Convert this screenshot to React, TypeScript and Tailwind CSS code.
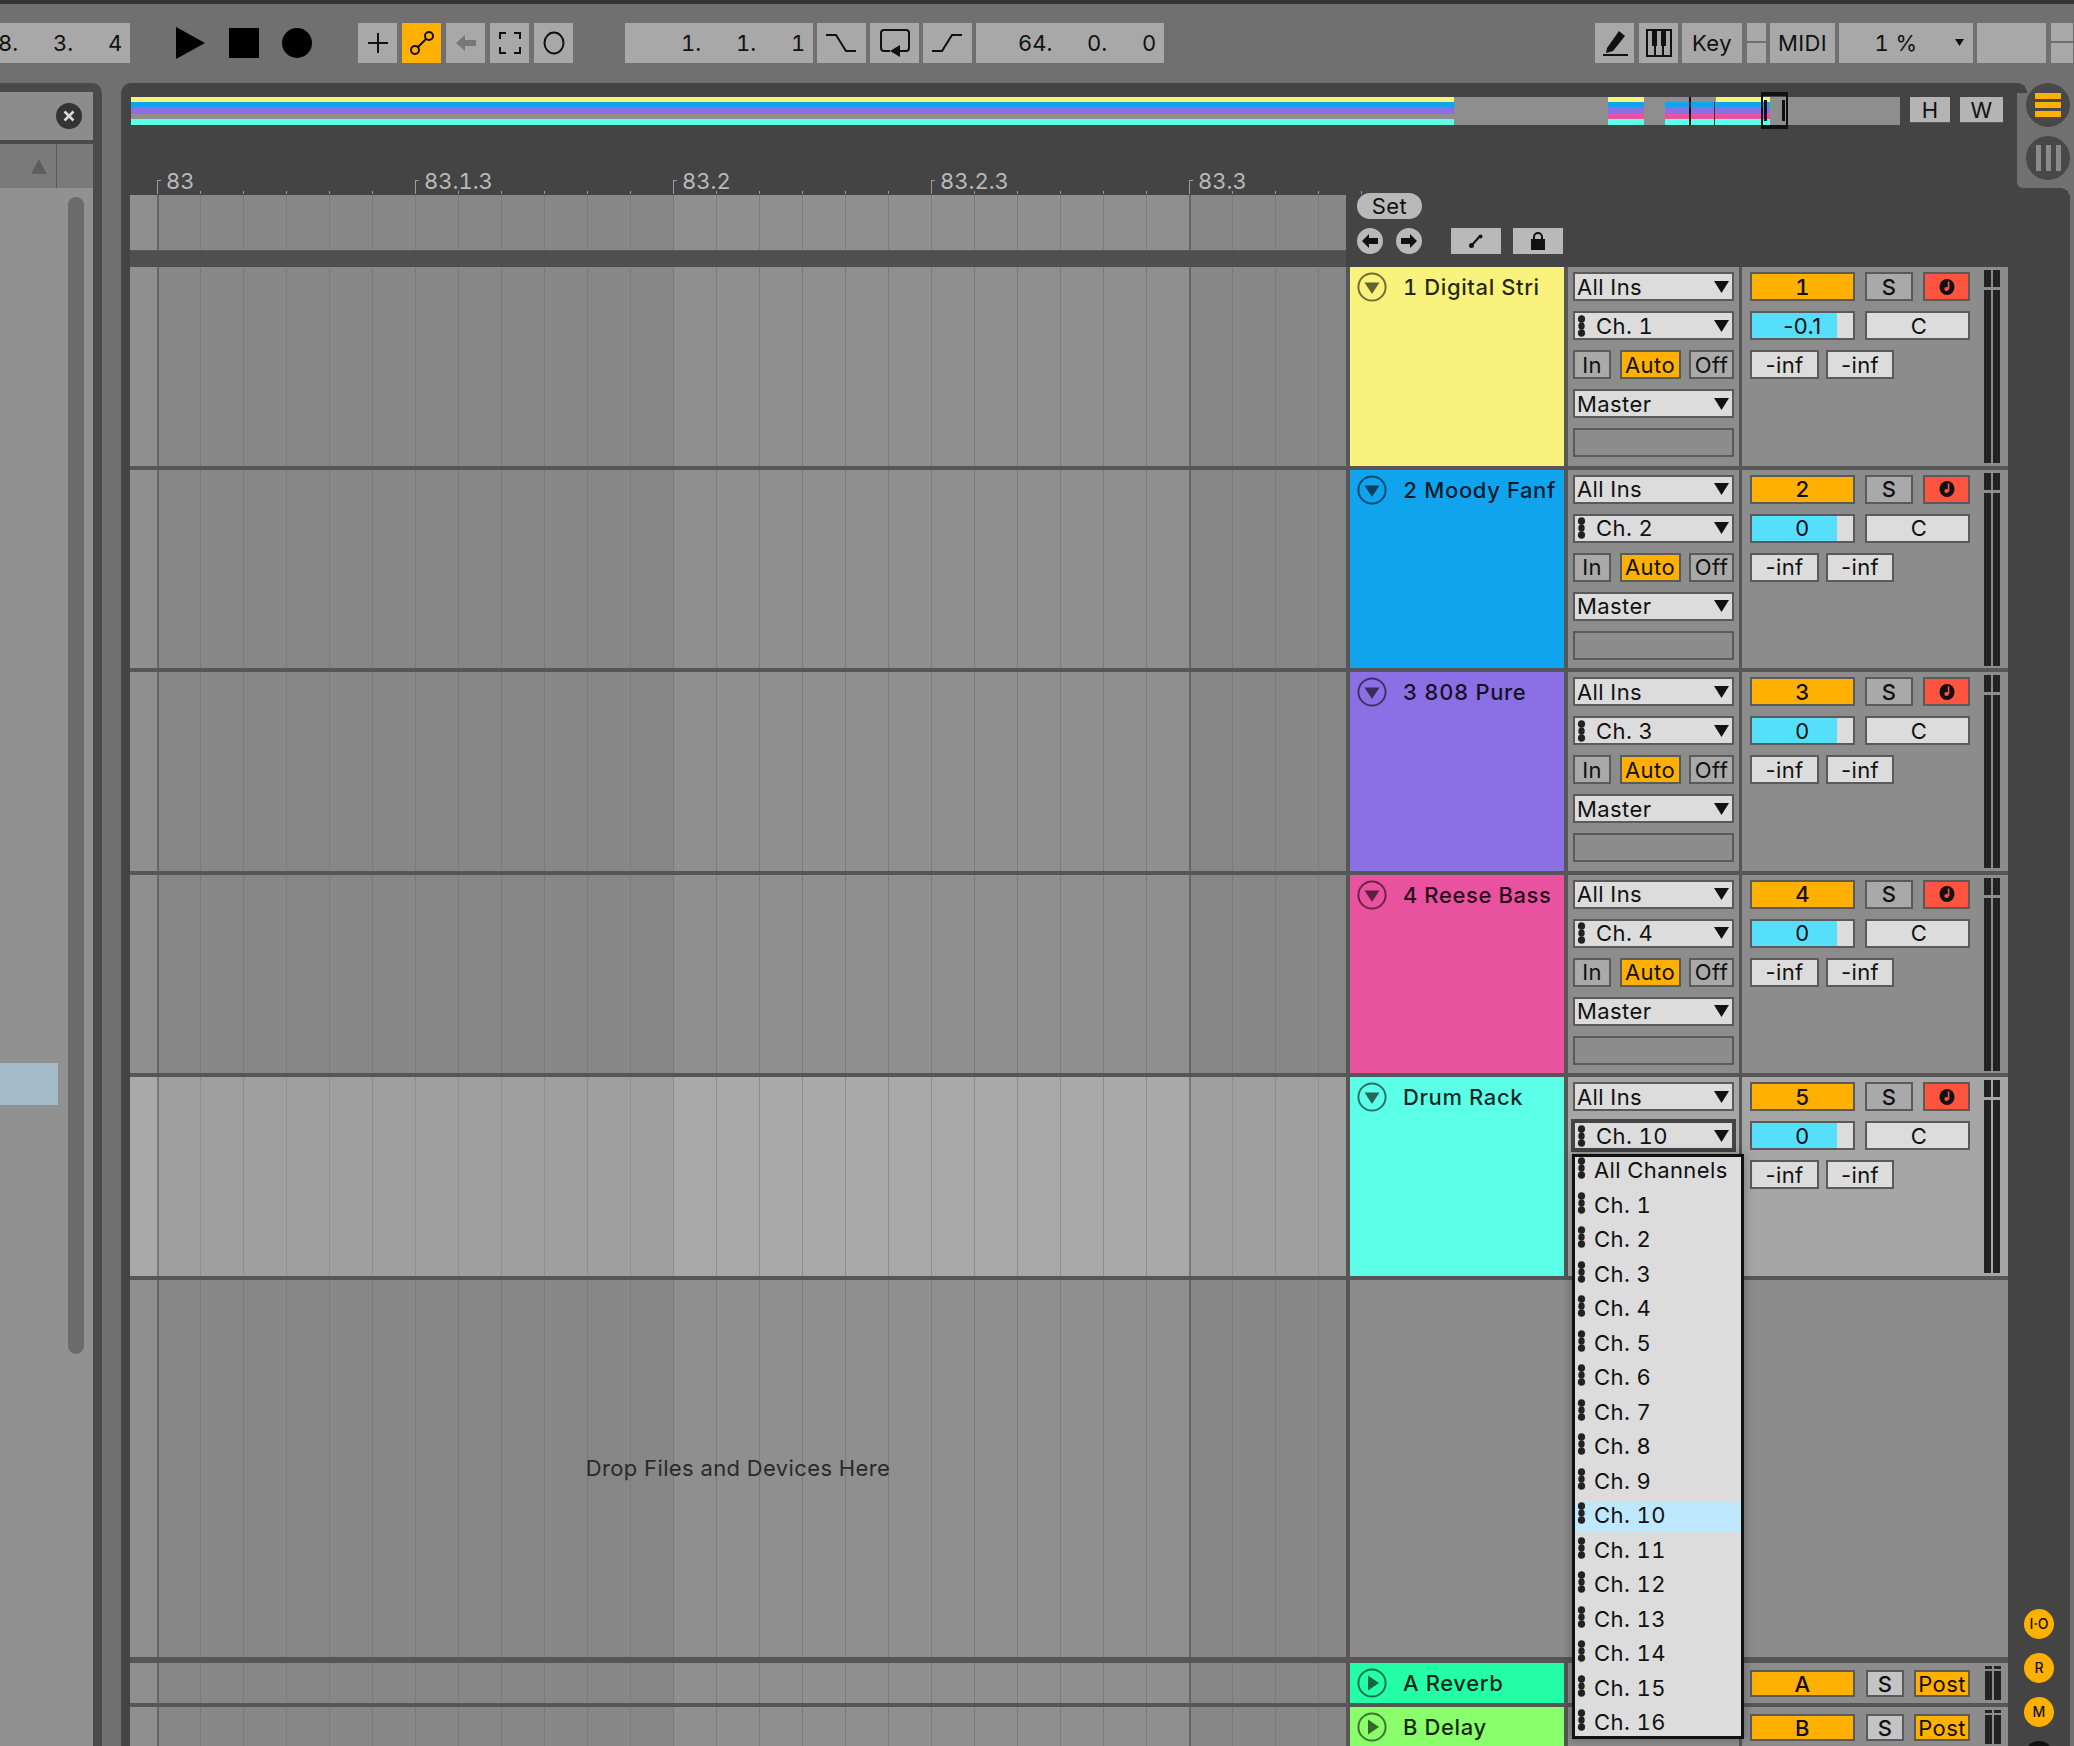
import React from "react";

const tracks = [
  { num: "1", name: "1 Digital Stri", color: "bg-[#f9f27c]", ch: "Ch. 1", pan: "-0.1" },
  { num: "2", name: "2 Moody Fanf", color: "bg-[#10a4ee]", ch: "Ch. 2", pan: "0" },
  { num: "3", name: "3 808 Pure", color: "bg-[#8b6fe4]", ch: "Ch. 3", pan: "0" },
  { num: "4", name: "4 Reese Bass", color: "bg-[#e8529f]", ch: "Ch. 4", pan: "0" },
];

const channels = [
  "All Channels", "Ch. 1", "Ch. 2", "Ch. 3", "Ch. 4", "Ch. 5", "Ch. 6", "Ch. 7", "Ch. 8",
  "Ch. 9", "Ch. 10", "Ch. 11", "Ch. 12", "Ch. 13", "Ch. 14", "Ch. 15", "Ch. 16",
];

const rulerLabels = ["83", "83.1.3", "83.2", "83.2.3", "83.3"];

function MidiDots() {
  return (
    <svg width="9" height="22" viewBox="0 0 9 22" className="flex-none">
      <ellipse cx="4.5" cy="4" rx="3.6" ry="3.8" fill="#222" />
      <ellipse cx="4.5" cy="11" rx="3.2" ry="3.8" fill="#222" />
      <ellipse cx="4.5" cy="18" rx="3.6" ry="3.8" fill="#222" />
    </svg>
  );
}

function Caret() {
  return (
    <svg width="15" height="12" viewBox="0 0 15 12" className="flex-none">
      <path d="M0 0h15L7.5 12z" fill="#111" />
    </svg>
  );
}

function Select({ label, midi, focus }: { label: string; midi?: boolean; focus?: boolean }) {
  return (
    <div className={`flex items-center justify-between h-[29px] bg-[#dcdcdc] border-2 pl-[2px] pr-[3px] ${focus ? "border-[#444] outline-2 outline-[#444]" : "border-[#5a5a5a]"}`}>
      <span className="flex items-center gap-[10px]">
        {midi && <MidiDots />}
        <span>{label}</span>
      </span>
      <Caret />
    </div>
  );
}

function Cell({ className, children }: { className: string; children?: React.ReactNode }) {
  return (
    <div className={`flex items-center justify-center h-[29px] border-2 border-[#5a5a5a] ${className}`}>
      {children}
    </div>
  );
}

function GridCells({ bright }: { bright?: boolean }) {
  const line = bright ? "border-[#8e8e8e]" : "border-[#7a7a7a]";
  const strong = bright ? "border-[#777]" : "border-[#666]";
  const light = bright ? "bg-[#a9a9a9]" : "bg-[#8f8f8f]";
  const dark = bright ? "bg-[#9f9f9f]" : "bg-[#878787]";
  const cells = Array.from({ length: 28 }, (_, i) => i);
  return (
    <div className="flex flex-none w-[1216px] h-full overflow-hidden">
      <div className={`flex-none w-[27px] ${light}`} />
      {cells.map((i) => (
        <div key={i} className={`flex-none w-[43px] ${i % 24 === 0 ? `border-l-2 ${strong}` : `border-l ${line}`} ${i % 24 < 12 ? dark : light}`} />
      ))}
    </div>
  );
}

function Meter({ tall }: { tall?: boolean }) {
  return (
    <div className={`flex gap-[2px] flex-none ${tall ? "h-[193px] -mt-[2px]" : "h-[34px]"}`}>
      <div className={`flex flex-col w-[7px] h-full ${tall ? "gap-[3px]" : "gap-[2px]"}`}>
        <div className={`bg-[#222] ${tall ? "h-[17px]" : "h-[3px]"}`} />
        <div className="bg-[#222] flex-1" />
      </div>
      <div className={`flex flex-col w-[7px] h-full ${tall ? "gap-[3px]" : "gap-[2px]"}`}>
        <div className={`bg-[#222] ${tall ? "h-[17px]" : "h-[3px]"}`} />
        <div className="bg-[#222] flex-1" />
      </div>
    </div>
  );
}

function ArmIcon() {
  return (
    <svg width="16" height="18" viewBox="0 0 16 18">
      <ellipse cx="8" cy="9" rx="7.5" ry="8" fill="#111" />
      <path d="M9.600 3.500v7.500" stroke="#ff5440" strokeWidth="1.6" />
      <ellipse cx="7.6" cy="11" rx="2.3" ry="1.9" fill="#ff5440" />
    </svg>
  );
}

function FoldIcon({ open = true }: { open?: boolean }) {
  return (
    <svg width="30" height="30" viewBox="0 0 30 30" className="flex-none">
      <circle cx="15" cy="15" r="13.6" fill="none" stroke="#000" strokeOpacity="0.55" strokeWidth="2" />
      {open ? <path d="M7.500 10.500h15L15 22z" fill="#000" fillOpacity="0.6" /> : <path d="M11 7.500v15L22 15z" fill="#000" fillOpacity="0.6" />}
    </svg>
  );
}

function TrackRow({ t, bright, menu }: { t: { num: string; name: string; color: string; ch: string; pan: string }; bright?: boolean; menu?: boolean }) {
  const panel = bright ? "bg-[#a6a6a6]" : "bg-[#8c8c8c]";
  return (
    <div className="flex flex-none h-[198.5px]">
      <GridCells bright={bright} />
      <div className={`flex-none w-[214px] ml-[4px] ${t.color} flex items-start gap-[16px] pl-[7px] pt-[5px] font-medium text-[#000]/85`}>
        <FoldIcon />
        <span className="whitespace-nowrap leading-[30px] tracking-[0.6px]">{t.name}</span>
      </div>
      <div className={`relative flex-none w-[171px] ml-[4px] ${panel} flex flex-col gap-[10px] px-[5px] pt-[5px]`}>
        <Select label="All Ins" />
        <Select label={t.ch} midi focus={menu} />
        {!menu && (
          <>
            <div className="flex justify-between">
              <Cell className="w-[38px] bg-[#a9a9a9]">In</Cell>
              <Cell className="w-[61px] bg-[#ffb000]">Auto</Cell>
              <Cell className="w-[45px] bg-[#a9a9a9]">Off</Cell>
            </div>
            <Select label="Master" />
            <div className="h-[29px] border-2 border-[#5a5a5a] bg-[#8c8c8c]" />
          </>
        )}
        {menu && <ChannelMenu />}
      </div>
      <div className={`flex-none w-[266px] ml-[3px] ${panel} flex pl-[8px] pt-[5px] pr-[8px] justify-between`}>
        <div className="flex flex-col gap-[10px] w-[220px]">
          <div className="flex">
            <Cell className="w-[105px] bg-[#ffb000] font-medium">{t.num}</Cell>
            <Cell className="w-[48px] ml-[10px] bg-[#a9a9a9] font-medium">S</Cell>
            <Cell className="w-[47px] ml-[10px] bg-[#ff5440]"><ArmIcon /></Cell>
          </div>
          <div className="flex">
            <div className="relative w-[105px] h-[29px] border-2 border-[#5a5a5a] bg-[#dcdcdc] flex">
              <div className="w-[85px] bg-[#55dffa]" />
              <span className="absolute inset-0 flex items-center justify-center normal-nums">{t.pan}</span>
            </div>
            <Cell className="w-[105px] ml-[10px] pl-[3px] bg-[#dcdcdc]">C</Cell>
          </div>
          <div className="flex gap-[7px]">
            <Cell className="w-[69px] bg-[#dcdcdc] normal-nums">-inf</Cell>
            <Cell className="w-[68px] bg-[#dcdcdc] normal-nums">-inf</Cell>
          </div>
        </div>
        <Meter tall />
      </div>
    </div>
  );
}

function ChannelMenu() {
  return (
    <div className="absolute left-[4px] top-[77px] w-[172px] h-[585px] overflow-hidden z-10 bg-[#dcdcdc] border-[3px] border-[#111] shadow-[0_0_10px_rgba(0,0,0,0.3)]">
      {channels.map((c) => (
        <div key={c} className="h-[34.5px]">
          <div className={`flex items-start gap-[8px] h-[30px] pl-[2px] ${c === "Ch. 10" ? "bg-[#bfe8ff]" : ""}`}>
            <MidiDots />
            <span className="leading-[27px] whitespace-nowrap">{c}</span>
          </div>
        </div>
      ))}
    </div>
  );
}

function ReturnRow({ name, letter, color, grow }: { name: string; letter: string; color: string; grow?: boolean }) {
  return (
    <div className={`flex ${grow ? "h-[45px]" : "h-[40px]"} flex-none`}>
      <GridCells />
      <div className={`flex-none w-[214px] ml-[4px] ${color} flex items-start gap-[16px] pl-[7px] pt-[5px] font-medium text-[#000]/85`}>
        <FoldIcon open={false} />
        <span className="leading-[30px] tracking-[0.6px]">{name}</span>
      </div>
      <div className="flex-none w-[171px] ml-[4px] bg-[#8c8c8c]" />
      <div className="flex-none w-[266px] ml-[3px] bg-[#8c8c8c] flex items-start pl-[8px] pt-[7px] pr-[7px]">
        <Cell className="w-[105px] !h-[27px] bg-[#ffb000] font-medium">{letter}</Cell>
        <Cell className="w-[38px] !h-[27px] ml-[11px] bg-[#c4c4c4] font-medium">S</Cell>
        <Cell className="w-[56px] !h-[27px] ml-[10px] bg-[#ffb000]">Post</Cell>
        <div className="ml-[15px] -mt-[4px]"><Meter /></div>
      </div>
    </div>
  );
}

function ToolBtn({ w, className = "bg-[#a8a8a8]", children }: { w: string; className?: string; children?: React.ReactNode }) {
  return <div className={`flex flex-none items-center justify-center h-[40px] ${w} ${className}`}>{children}</div>;
}

function SplitBtn({ w }: { w: string }) {
  return (
    <div className={`flex flex-col flex-none h-[40px] ${w} gap-[2px]`}>
      <div className="h-[18px] bg-[#a8a8a8]" />
      <div className="flex-1 bg-[#a8a8a8]" />
    </div>
  );
}

function TimeSeg({ parts, w, className = "" }: { parts: string[]; w: string; className?: string }) {
  return (
    <div className={`flex flex-none justify-end items-center h-[40px] pr-[6px] bg-[#a8a8a8] overflow-hidden tracking-normal ${w} ${className}`}>
      {parts.map((p, i) => (
        <span key={i} className={`flex-none ${i === parts.length - 1 ? "w-[16px]" : p.length > 2 ? "w-[69px]" : "w-[55px]"}`}>{p}</span>
      ))}
    </div>
  );
}

function Toolbar() {
  return (
    <div className="flex-none h-[83px] bg-[#707070] border-t-4 border-[#333] pt-[19px]">
      <div className="flex items-start">
        <TimeSeg parts={["8.", "3.", "4"]} w="w-[130px]" />
        <svg width="29" height="32" viewBox="0 0 29 32" className="ml-[46px] mt-[4px] flex-none"><path d="M0 0l29 16L0 32z" fill="#000" /></svg>
        <div className="w-[30px] h-[30px] bg-black ml-[24px] mt-[5px] flex-none" />
        <div className="w-[30px] h-[30px] bg-black rounded-full ml-[23px] mt-[5px] flex-none" />
        <div className="flex gap-[5px] ml-[46px]">
          <ToolBtn w="w-[39px]">
            <svg width="22" height="22" viewBox="0 0 22 22"><path d="M11 1v20M1 11h20" stroke="#111" strokeWidth="2" /></svg>
          </ToolBtn>
          <ToolBtn w="w-[39px]" className="bg-[#ffb000]">
            <svg width="26" height="26" viewBox="0 0 26 26" fill="none" stroke="#111" strokeWidth="2"><circle cx="6" cy="20" r="4" /><circle cx="20" cy="6" r="4" /><path d="M9 17l8-8" /></svg>
          </ToolBtn>
          <ToolBtn w="w-[39px]">
            <svg width="20" height="16" viewBox="0 0 20 16"><path d="M0 8l9-8v5h11v6H9v5z" fill="#777" /></svg>
          </ToolBtn>
          <ToolBtn w="w-[39px]">
            <svg width="22" height="22" viewBox="0 0 22 22" fill="none" stroke="#111" strokeWidth="2"><path d="M1 7V1h6M15 1h6v6M21 15v6h-6M7 21H1v-6" /></svg>
          </ToolBtn>
          <ToolBtn w="w-[39px]">
            <svg width="22" height="24" viewBox="0 0 22 24" fill="none" stroke="#111" strokeWidth="2"><ellipse cx="11" cy="12" rx="9.500" ry="10.500" /></svg>
          </ToolBtn>
        </div>
        <div className="flex gap-[4px] ml-[52px]">
          <TimeSeg parts={["1.", "1.", "1"]} w="w-[188px]" />
          <ToolBtn w="w-[49px]">
            <svg width="32" height="20" viewBox="0 0 32 20" fill="none" stroke="#111" strokeWidth="2"><path d="M0 2h10l10 16h10" /></svg>
          </ToolBtn>
          <ToolBtn w="w-[49px]">
            <svg width="32" height="30" viewBox="0 0 32 30" fill="none" stroke="#111" strokeWidth="2"><path d="M11 23H5a3 3 0 0 1-3-3V5a3 3 0 0 1 3-3h22a3 3 0 0 1 3 3v15a3 3 0 0 1-3 3h-6" /><path d="M21 17v12l-10-6z" fill="#111" stroke="none" /></svg>
          </ToolBtn>
          <ToolBtn w="w-[49px]">
            <svg width="32" height="20" viewBox="0 0 32 20" fill="none" stroke="#111" strokeWidth="2"><path d="M0 18h10L20 2h10" /></svg>
          </ToolBtn>
          <TimeSeg parts={["64.", "0.", "0"]} w="w-[188px]" />
        </div>
        <div className="flex ml-[431px]">
          <ToolBtn w="w-[39px]">
            <svg width="26" height="30" viewBox="0 0 26 30"><path d="M5 20L17 3l6 5-12 15-7 2z" fill="#111" /><path d="M1 27h25" stroke="#111" strokeWidth="2" /></svg>
          </ToolBtn>
          <ToolBtn w="w-[39px] ml-[5px]">
            <svg width="26" height="28" viewBox="0 0 26 28" fill="none" stroke="#111" strokeWidth="2"><rect x="1" y="1" width="24" height="26" /><path d="M9 27V17M17 27V17" /><path d="M6 1h5v16H6zM15 1h5v16h-5z" fill="#111" stroke="none" /></svg>
          </ToolBtn>
          <ToolBtn w="w-[60px] ml-[4px]">Key</ToolBtn>
          <div className="ml-[5px]"><SplitBtn w="w-[19px]" /></div>
          <ToolBtn w="w-[65px] ml-[4px]">MIDI</ToolBtn>
          <div className="relative flex-none ml-[4px]">
            <ToolBtn w="w-[134px]"><span className="mr-[20px]">1 %</span></ToolBtn>
            <svg width="9" height="7" viewBox="0 0 9 7" className="absolute right-[9px] top-[16px]"><path d="M0 0h9L4.500 7z" fill="#111" /></svg>
          </div>
          <ToolBtn w="w-[69px] ml-[4px]" />
          <div className="ml-[5px]"><SplitBtn w="w-[22px]" /></div>
        </div>
      </div>
    </div>
  );
}

function Browser() {
  return (
    <div className="flex-none w-[102px] h-full bg-[#4a4a4a] rounded-tr-[10px] pt-[9px] pr-[9px] flex flex-col">
      <div className="flex items-center justify-end h-[48px] bg-[#8c8c8c] pr-[11px]">
        <svg width="26" height="26" viewBox="0 0 26 26"><circle cx="13" cy="13" r="13" fill="#333" /><path d="M8.500 8.500l9 9M17.500 8.500l-9 9" stroke="#ddd" strokeWidth="2.500" /></svg>
      </div>
      <div className="flex h-[44px] mt-[4px] bg-[#7a7a7a]">
        <div className="w-[57px] flex items-center justify-end pr-[9px] border-r border-[#5a5a5a]">
          <svg width="16" height="15" viewBox="0 0 16 15"><path d="M8 0l8 15H0z" fill="#5e5e5e" /></svg>
        </div>
      </div>
      <div className="flex-1 bg-[#919191] flex justify-between pt-[9px] pl-0 pr-[9px]">
        <div className="w-[58px] h-[42px] mt-[866px] bg-[#a5bac9]" />
        <div className="w-[16px] h-[1157px] rounded-full bg-[#6b6b6b]" />
      </div>
    </div>
  );
}

export default function App() {
  const drum = { num: "5", name: "Drum Rack", color: "bg-[#5cffe8]", ch: "Ch. 10", pan: "0" };
  const ticks = Array.from({ length: 29 }, (_, i) => i);
  return (
    <div className="w-[2074px] h-[1746px] overflow-hidden bg-[#707070] flex flex-col text-[22px] leading-none tracking-[0.4px] tabular-nums text-[#111] font-['Inter',sans-serif]">
      <Toolbar />
      <div className="flex flex-1 min-h-0">
        <Browser />
        <div className="relative flex-none w-[1949px] h-full ml-[19px] bg-[#444] rounded-tr-[10px] rounded-tl-[10px] pl-[9px] flex flex-col">
          {/* overview strip */}
          <div className="flex items-start mt-[14px] ml-[1px] h-[28px] flex-none">
            <div className="relative flex w-[1769px] h-[28px] bg-[#8e8e8e]">
              <div className="flex flex-col w-[1323px]">
                <div className="h-[5px] bg-[#f9f27c]" />
                <div className="h-[5px] bg-[#10a4ee]" />
                <div className="h-[7px] bg-[#8b6fe4]" />
                <div className="h-[5px]" />
                <div className="h-[6px] bg-[#5cffe8]" />
              </div>
              <div className="flex flex-col w-[36px] ml-[154px]">
                <div className="h-[5px] bg-[#f9f27c]" />
                <div className="h-[5px] bg-[#10a4ee]" />
                <div className="h-[7px] bg-[#8b6fe4]" />
                <div className="h-[5px] bg-[#e8529f]" />
                <div className="h-[6px] bg-[#5cffe8]" />
              </div>
              <div className="flex flex-col w-[105px] ml-[21px] pt-[5px]">
                <div className="h-[5px] bg-[#10a4ee]" />
                <div className="h-[7px] bg-[#8b6fe4]" />
                <div className="h-[5px] bg-[#e8529f]" />
                <div className="h-[6px] bg-[#5cffe8]" />
              </div>
              <div className="absolute left-[1585px] top-0 w-[54px] h-[5px] bg-[#f9f27c]" />
              <div className="absolute left-[1558px] top-0 w-[2px] h-[28px] bg-[#111]" />
              <div className="absolute left-[1583px] top-[5px] w-[1px] h-[23px] bg-[#333]" />
              <div className="absolute left-[1630px] -top-[5px] w-[27px] h-[37px] border-y-4 border-x-2 border-[#111] flex justify-between px-[1px] py-[4px]">
                <div className="w-[3px] bg-[#111]" />
                <div className="w-[3px] bg-[#111]" />
              </div>
            </div>
            <div className="flex items-center justify-center w-[40px] h-[26px] ml-[10px] bg-[#b4b4b4] border-b border-[#5a5a5a]">H</div>
            <div className="flex items-center justify-center w-[43px] h-[26px] ml-[10px] bg-[#b4b4b4] border-b border-[#5a5a5a]">W</div>
          </div>
          {/* beat ruler */}
          <div className="flex-none h-[70px] flex items-end pl-[27px] text-[#b9b9b9] tracking-normal">
            {ticks.map((i) => (
              <div key={i} className="relative flex-none w-[43px] h-[16px] flex items-end">
                <div className={`border-l border-[#9a9a9a] ${i % 6 === 0 ? "h-[14px] mb-[1px]" : "h-[3px] mb-[1px]"}`} />
                {i % 6 === 0 && <div className="absolute left-0 top-[1px] w-[4px] border-t border-[#9a9a9a]" />}
                {i % 6 === 0 && i / 6 < rulerLabels.length && (
                  <span className="absolute left-[9px] -top-[9px] whitespace-nowrap">{rulerLabels[i / 6]}</span>
                )}
              </div>
            ))}
          </div>
          {/* automation strip + set buttons */}
          <div className="flex flex-none h-[72px]">
            <div className="flex-none w-[1216px] h-[72px] bg-[#4f4f4f]">
              <div className="h-[56px] border-b border-[#5a5a5a]"><GridCells /></div>
            </div>
            <div className="flex flex-col ml-[11px] -mt-[2px]">
              <div className="flex items-center justify-center w-[65px] h-[26px] rounded-full bg-[#b9b9b9]">Set</div>
              <div className="flex items-center mt-[9px]">
                <div className="w-[26px] h-[26px] rounded-full bg-[#b9b9b9] flex items-center justify-center">
                  <svg width="16" height="14" viewBox="0 0 16 14"><path d="M0 7l7-7v4h9v6H7v4z" fill="#111" /></svg>
                </div>
                <div className="w-[26px] h-[26px] ml-[13px] rounded-full bg-[#b9b9b9] flex items-center justify-center">
                  <svg width="16" height="14" viewBox="0 0 16 14"><path d="M16 7L9 0v4H0v6h9v4z" fill="#111" /></svg>
                </div>
                <div className="w-[50px] h-[26px] ml-[29px] bg-[#b9b9b9] flex items-center justify-center">
                  <svg width="16" height="16" viewBox="0 0 16 16" fill="none" stroke="#111"><path d="M4 12L12 3" strokeWidth="2" /><circle cx="3.500" cy="12.500" r="2.500" fill="#111" stroke="none" /><circle cx="12.500" cy="3.500" r="2" fill="#111" stroke="none" /></svg>
                </div>
                <div className="w-[50px] h-[26px] ml-[12px] bg-[#b9b9b9] flex items-center justify-center">
                  <svg width="16" height="18" viewBox="0 0 16 18"><rect x="1" y="7" width="14" height="11" fill="#111" /><path d="M4 8V5a4 4 0 0 1 8 0v3" fill="none" stroke="#111" strokeWidth="2" /></svg>
                </div>
              </div>
            </div>
          </div>
          {/* tracks */}
          <div className="flex flex-col gap-[4px] w-[1878px] flex-1 min-h-0 bg-[#565656]">
            {tracks.map((t) => (
              <TrackRow key={t.num} t={t} />
            ))}
            <TrackRow t={drum} bright menu />
            <div className="flex flex-none h-[377.5px]">
              <div className="relative w-[1216px] flex-none">
                <GridCells />
                <div className="absolute inset-0 flex items-center justify-center">
                  <span className="text-[#2a2a2a]">Drop Files and Devices Here</span>
                </div>
              </div>
              <div className="flex-1 ml-[4px] bg-[#8c8c8c]" />
            </div>
            <div className="h-[2px] -mb-[4px] flex-none" />
            <ReturnRow name="A Reverb" letter="A" color="bg-[#24ffa7]" />
            <ReturnRow name="B Delay" letter="B" color="bg-[#89ff6b]" grow />
          </div>
          {/* side strip with view buttons, sits over the panel's corner */}
          <div className="absolute -right-[4px] top-0 w-[57px] h-[105px] bg-[#707070] rounded-bl-[6px] flex flex-col items-start pl-[9px] gap-[9px]">
            <div className="absolute left-0 top-0 w-[10px] h-[10px] bg-[radial-gradient(circle_at_0_100%,#444_10px,transparent_10px)]" />
            <div className="absolute right-[4px] bottom-[-10px] w-[10px] h-[10px] bg-[radial-gradient(circle_at_0_100%,transparent_10px,#707070_10px)]" />
            <div className="w-[44px] h-[44px] rounded-full bg-[#484848] flex flex-col items-center justify-center gap-[3px]">
              <div className="w-[26px] h-[6px] bg-[#ffb000]" />
              <div className="w-[26px] h-[6px] bg-[#ffb000]" />
              <div className="w-[26px] h-[6px] bg-[#ffb000]" />
            </div>
            <div className="w-[44px] h-[44px] rounded-full bg-[#484848] flex items-center justify-center gap-[5px]">
              <div className="w-[5px] h-[26px] bg-[#8a8a8a]" />
              <div className="w-[5px] h-[26px] bg-[#8a8a8a]" />
              <div className="w-[5px] h-[26px] bg-[#8a8a8a]" />
            </div>
          </div>
          {/* small round view toggles */}
          <div className="absolute right-[16px] top-[1526px] flex flex-col gap-[14px] text-[14px] font-medium tracking-normal">
            <div className="w-[30px] h-[30px] rounded-full bg-[#ffb000] flex items-center justify-center">I·O</div>
            <div className="w-[30px] h-[30px] rounded-full bg-[#ffb000] flex items-center justify-center">R</div>
            <div className="w-[30px] h-[30px] rounded-full bg-[#ffb000] flex items-center justify-center">M</div>
            <div className="w-[30px] h-[30px] rounded-full bg-[#111]" />
          </div>
        </div>
      </div>
    </div>
  );
}
